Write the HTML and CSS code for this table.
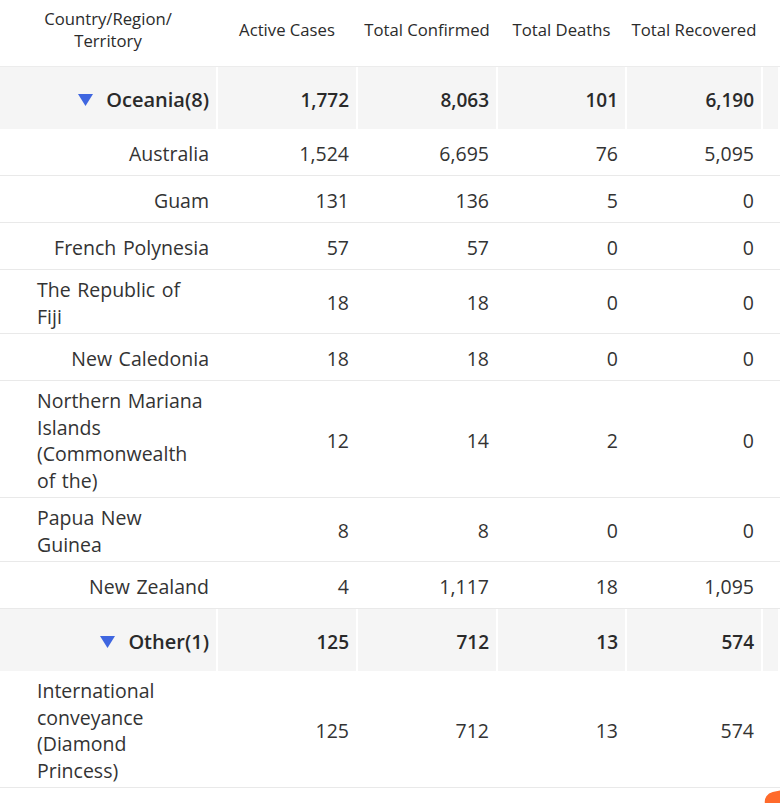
FILE: index.html
```html
<!DOCTYPE html>
<html lang="en">
<head>
<meta charset="utf-8">
<title>Oceania cases</title>
<link rel="stylesheet" href="styles.css">
</head>
<body>
<div class="table">
  <div class="row head">
    <div class="cell">Country/Region/<br>Territory</div>
    <div class="cell">Active Cases</div>
    <div class="cell">Total Confirmed</div>
    <div class="cell">Total Deaths</div>
    <div class="cell">Total Recovered</div>
    <div class="cell"></div>
  </div>

  <div class="row group">
    <div class="cell"><svg class="caret" width="15" height="12" viewBox="0 0 15 12"><path d="M0 0H15L7.5 12Z"/></svg><span class="gname">Oceania(8)</span></div>
    <div class="cell">1,772</div>
    <div class="cell">8,063</div>
    <div class="cell">101</div>
    <div class="cell">6,190</div>
    <div class="cell"></div>
  </div>
  <div class="row">
    <div class="cell"><span class="name">Australia</span></div>
    <div class="cell">1,524</div><div class="cell">6,695</div><div class="cell">76</div><div class="cell">5,095</div><div class="cell"></div>
  </div>
  <div class="row">
    <div class="cell"><span class="name">Guam</span></div>
    <div class="cell">131</div><div class="cell">136</div><div class="cell">5</div><div class="cell">0</div><div class="cell"></div>
  </div>
  <div class="row">
    <div class="cell"><span class="name">French Polynesia</span></div>
    <div class="cell">57</div><div class="cell">57</div><div class="cell">0</div><div class="cell">0</div><div class="cell"></div>
  </div>
  <div class="row">
    <div class="cell"><span class="name">The Republic of Fiji</span></div>
    <div class="cell">18</div><div class="cell">18</div><div class="cell">0</div><div class="cell">0</div><div class="cell"></div>
  </div>
  <div class="row">
    <div class="cell"><span class="name">New Caledonia</span></div>
    <div class="cell">18</div><div class="cell">18</div><div class="cell">0</div><div class="cell">0</div><div class="cell"></div>
  </div>
  <div class="row">
    <div class="cell"><span class="name">Northern Mariana Islands (Commonwealth of the)</span></div>
    <div class="cell">12</div><div class="cell">14</div><div class="cell">2</div><div class="cell">0</div><div class="cell"></div>
  </div>
  <div class="row">
    <div class="cell"><span class="name">Papua New Guinea</span></div>
    <div class="cell">8</div><div class="cell">8</div><div class="cell">0</div><div class="cell">0</div><div class="cell"></div>
  </div>
  <div class="row">
    <div class="cell"><span class="name">New Zealand</span></div>
    <div class="cell">4</div><div class="cell">1,117</div><div class="cell">18</div><div class="cell">1,095</div><div class="cell"></div>
  </div>

  <div class="row group">
    <div class="cell"><svg class="caret" width="15" height="12" viewBox="0 0 15 12"><path d="M0 0H15L7.5 12Z"/></svg><span class="gname">Other(1)</span></div>
    <div class="cell">125</div>
    <div class="cell">712</div>
    <div class="cell">13</div>
    <div class="cell">574</div>
    <div class="cell"></div>
  </div>
  <div class="row">
    <div class="cell"><span class="name">International conveyance (Diamond Princess)</span></div>
    <div class="cell">125</div><div class="cell">712</div><div class="cell">13</div><div class="cell">574</div><div class="cell"></div>
  </div>
</div>
<div class="fab"></div>
</body>
</html>
```

FILE: styles.css
```css
html, body {
  margin: 0;
  padding: 0;
  background: #fff;
}
body {
  width: 780px;
  height: 803px;
  overflow: hidden;
  position: relative;
  font-family: "Open Sans", "Noto Sans", sans-serif;
  font-size: 19.5px;
  line-height: 26.5px;
  color: #333;
}
.row {
  display: grid;
  grid-template-columns: 218px 140px 140px 129px 136px 1fr;
  min-height: 47px;
  border-bottom: 1px solid #e9e9e9;
  box-sizing: border-box;
}
.cell {
  display: flex;
  align-items: center;
  justify-content: flex-end;
  text-align: right;
  padding: 7px 7px 3px 0;
  border-right: 2px solid #fff;
  box-sizing: border-box;
  min-width: 0;
}
.name {
  display: inline-block;
  max-width: 172px;
  text-align: left;
  word-spacing: 1.5px;
}
.head {
  height: 67px;
  border-bottom-color: #ececec;
}
.head .cell {
  justify-content: center;
  text-align: center;
  font-size: 16.7px;
  line-height: 22.5px;
  font-weight: 500;
  padding: 0 0 6px 0;
  color: #2b2b2b;
}
.group {
  height: 62px;
  min-height: 62px;
  border-bottom: none;
  font-weight: 600;
  font-size: 19px;
  color: #2a2a2a;
}
.group .cell {
  background: #f5f5f5;
}
.gname {
  font-size: 20px;
}
.caret {
  fill: #3f66e0;
  margin-right: 13px;
  flex: none;
}
.fab {
  position: absolute;
  left: 767px;
  top: 789px;
  width: 44px;
  height: 44px;
  background: #ff6a2b;
  border-radius: 10px;
  transform: rotate(-12deg);
}
```
